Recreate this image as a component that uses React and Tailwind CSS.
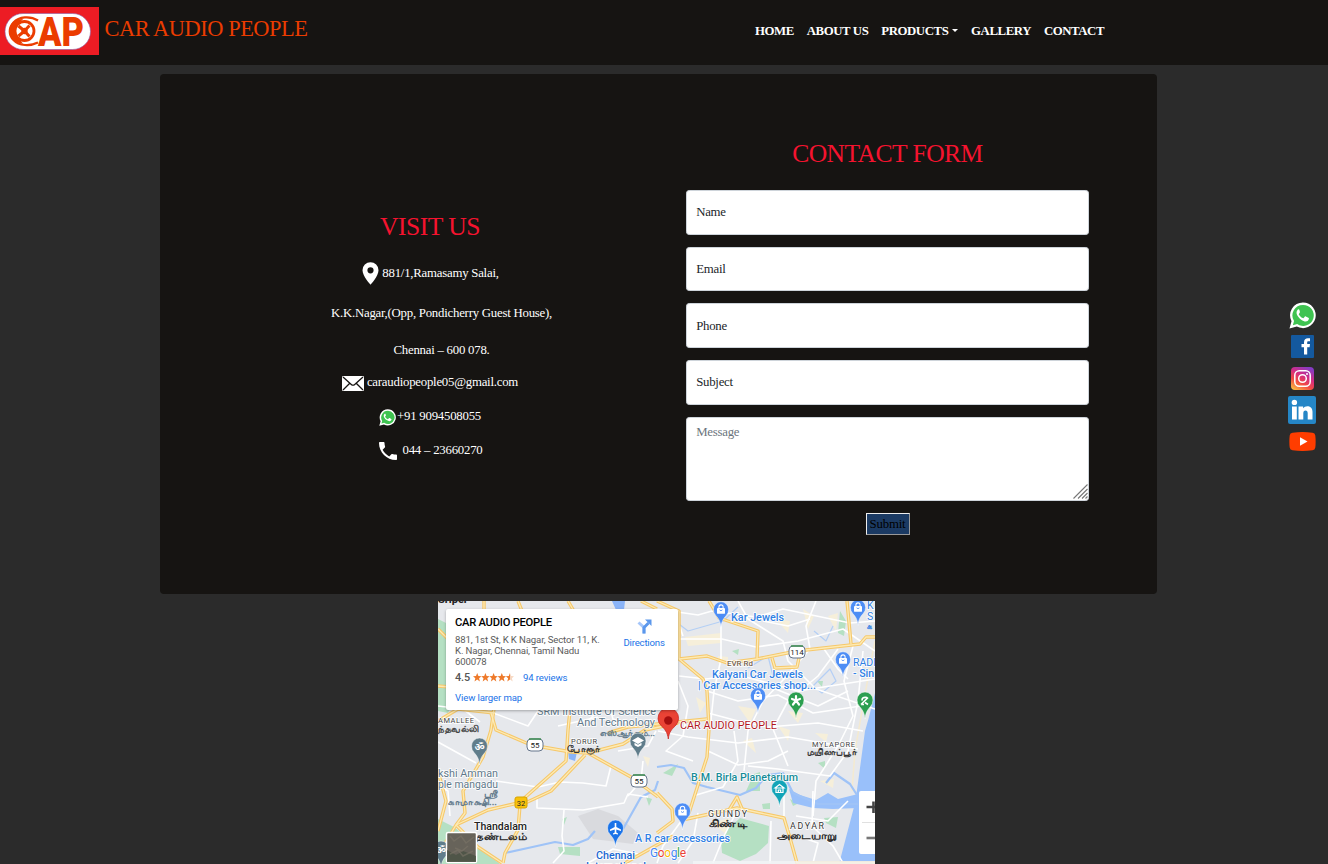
import React from 'react';

const navItems = ['HOME', 'ABOUT US', 'PRODUCTS', 'GALLERY', 'CONTACT'];

function Logo() {
  return (
    <svg width="99" height="48" viewBox="0 0 99 48" className="block shrink-0">
      <rect width="99" height="48" fill="#ed1c24" />
      <rect x="5" y="6.500" width="85.500" height="36" rx="18" fill="#fff" stroke="#8d5aa0" strokeWidth=".6" />
      <path d="M38 13.500C30 8.500 19 9.500 13.500 15.500C8.500 21 8.500 28 13.500 33C19 39 30 39.500 38 35.500" fill="none" stroke="#eb3c00" strokeWidth="2.200" />
      <path d="M20 13.500C7 15 7 33 20 35C15 29 15 19 20 13.500Z" fill="#eb3c00" stroke="#eb3c00" strokeWidth="2.500" />
      <circle cx="24.500" cy="24" r="9.500" fill="#fff" stroke="#eb3c00" strokeWidth="2.800" />
      <circle cx="24.500" cy="24" r="3.200" fill="#eb3c00" />
      <path d="M24.500 24L18.500 19M24.500 24L18.500 29M24.500 24L29.500 18.500M24.500 24L29.500 29.500" fill="none" stroke="#eb3c00" strokeWidth="3" />
      <text x="38" y="38.500" textLength="46" lengthAdjust="spacingAndGlyphs" fontFamily="Roboto" fontWeight="900" fontSize="40" fill="#eb3c00">AP</text>
    </svg>
  );
}

function WhatsApp({ size }) {
  return (
    <svg width={size} height={size} viewBox="0 0 28 28" className="block shrink-0">
      <path d="M14.500.5A13.300 13.300 0 0 0 2.600 20L.5 27.500l7.600-2A13.300 13.300 0 1 0 14.500.5Z" fill="#fff" />
      <path d="M14.500 3A10.900 10.900 0 0 0 5.200 19.600L4 24l4.500-1.200A10.900 10.900 0 1 0 14.500 3Z" fill="#3fc351" />
      <path d="M10.800 8.300c-.5-.9-1.200-.8-1.800-.2-3 3.300.3 7.800 3.600 10.200 3.500 2.500 6.800 2.600 7.900-.4.3-.9.200-1.300-.4-1.600l-2.700-1.300c-.5-.2-.8-.1-1.100.3l-1.100 1.300c-.3.300-.6.300-1 .1-1.800-.8-3.100-2.100-4-3.700-.2-.4-.1-.6.200-.9l.8-1.100c.2-.3.200-.6.100-.9Z" fill="#fff" />
    </svg>
  );
}

function Pin() {
  return (
    <svg width="17" height="23" viewBox="0 0 17 23" className="block shrink-0">
      <path fillRule="evenodd" d="M8.500.2A8 8 0 0 0 .5 8.200C.5 14.200 8.500 22.700 8.500 22.700S16.500 14.200 16.500 8.200A8 8 0 0 0 8.500.2Zm0 5a3.100 3.100 0 1 1 0 6.200 3.100 3.100 0 0 1 0-6.200Z" fill="#fff" />
    </svg>
  );
}

function Mail() {
  return (
    <svg width="22" height="15" viewBox="0 0 22 15" className="block shrink-0">
      <rect width="22" height="15" rx="1.200" fill="#fff" />
      <path d="M1 1l8.300 7.400q1.700 1.500 3.400 0L21 1M1 14l6.800-6.800M21 14l-6.800-6.800" fill="none" stroke="#161412" strokeWidth="1.300" />
    </svg>
  );
}

function Phone() {
  return (
    <svg width="18" height="18" viewBox="3 3 18 18" className="block shrink-0">
      <path d="M6.620 10.790c1.440 2.830 3.760 5.140 6.590 6.590l2.200-2.200c.27-.27.67-.36 1.020-.24 1.120.37 2.330.57 3.570.57.55 0 1 .45 1 1V20c0 .55-.45 1-1 1-9.390 0-17-7.610-17-17 0-.55.45-1 1-1h3.500c.55 0 1 .45 1 1 0 1.250.2 2.450.57 3.570.11.35.03.74-.25 1.020z" fill="#fff" />
    </svg>
  );
}

function Header() {
  return (
    <header className="flex h-[65px] bg-[#161412]">
      <div className="w-[750px] flex pt-[7px]">
        <Logo />
        <span className="ml-[5.500px] mt-[6px] text-[22.400px] leading-8 tracking-[-0.450px] text-[#eb3c00] whitespace-nowrap">CAR AUDIO PEOPLE</span>
      </div>
      <nav className="flex gap-[12.900px] pl-[5px] pt-[21px] text-[12.800px] leading-5 tracking-[-0.410px] font-bold text-white whitespace-nowrap">
        {navItems.map((item) => (
          <a key={item} href="#" className="flex">
            {item}
            {item === 'PRODUCTS' && <span className="ml-[3.800px] mt-2 h-0 w-0 border-x-[3.500px] border-t-[3.500px] border-x-transparent border-t-white" />}
          </a>
        ))}
      </nav>
    </header>
  );
}

function Visit() {
  return (
    <section className="w-[540px] shrink-0 pt-[137px] text-[12.800px] tracking-[-0.230px] text-white">
      <h2 className="h-8 text-center text-[25.600px] leading-8 tracking-[-0.500px] text-[#f5132f]">VISIT US</h2>
      <div className="mt-[18px] flex h-6 items-center justify-center gap-[3px] pl-[1px]"><Pin /><span className="pt-[2px]">881/1,Ramasamy Salai,</span></div>
      <div className="mt-4 flex h-6 items-center justify-center pl-[23px] pt-[2px]">K.K.Nagar,(Opp, Pondicherry Guest House),</div>
      <div className="mt-[13px] flex h-6 items-center justify-center pl-[23px] pt-[2px]">Chennai – 600 078.</div>
      <div className="mt-2 flex h-6 items-center justify-center gap-[3px]"><span className="pt-[3px]"><Mail /></span><span className="pt-[2px]">caraudiopeople05@gmail.com</span></div>
      <div className="mt-[10px] flex h-6 items-center justify-center gap-[1px]"><span className="pt-[3px]"><WhatsApp size={17} /></span><span className="pt-[2px]">+91 9094508055</span></div>
      <div className="mt-[10px] flex h-6 items-center justify-center gap-[6px] pl-[1px]"><span className="pt-[1px]"><Phone /></span><span className="pt-[2px]">044 – 23660270</span></div>
    </section>
  );
}

const field = 'block w-full rounded-[3.200px] border border-[#ced4da] bg-white px-[9.200px] text-[12.800px] tracking-[-0.250px] outline-none';

function ContactForm() {
  return (
    <form className="-ml-[14px] w-[403px] pt-16">
      <h2 className="h-8 text-center text-[25.600px] leading-8 tracking-[-0.550px] text-[#f5132f]">CONTACT FORM</h2>
      <div className="mt-5 flex flex-col gap-[12.200px]">
        {['Name', 'Email', 'Phone', 'Subject'].map((p) => (
          <input key={p} placeholder={p} className={field + ' h-[44.500px] pt-[1px] placeholder:text-[#212529]'} />
        ))}
        <div className="relative">
          <textarea placeholder="Message" className={field + ' h-[84px] resize-none pt-[5px] leading-[19.200px] placeholder:text-[#6c757d]'} />
          <svg width="15" height="15" viewBox="0 0 15 15" className="absolute bottom-[1.500px] right-[1.500px]">
            <path d="M.5 14.500l14-14M5 14.500L14.500 5M9 14.500L14.500 9M12.500 14.500l2-2" stroke="#777" strokeWidth="1.100" />
          </svg>
        </div>
      </div>
      <div className="mt-3 flex justify-center">
        <button type="button" className="h-[22px] w-[44px] border border-t-[#eee] border-l-[#eee] border-r-[#999] border-b-[#999] bg-[#1b3a63] text-center text-[12.800px] leading-5 tracking-[-0.200px] text-black">Submit</button>
      </div>
    </form>
  );
}

const white = [
  'M219 8L260 14L274 10L318 16L345 8L412 22L437 20', 'M283 18V58L276 90L272 128', 'M241 38H284L318 46L360 40L405 28L437 50',
  'M241 75L268 78L300 74L360 90L437 78', 'M300 0L310 18L345 40L350 60L378 88L437 108', 'M378 0L368 25L372 48L346 78L325 100L310 130L306 170',
  'M400 48L380 75L350 100L335 128L350 165', 'M415 45L406 80L415 115L400 145L378 180L375 215', 'M425 50L420 100L410 150L392 175L340 168L310 165',
  'M269 90L300 100L340 94L375 112L430 104', 'M270 112L300 120L330 126L380 122L425 130', 'M220 130L250 136L300 142L350 136L420 148',
  'M240 80L250 105L245 135L228 150L255 160', 'M270 150L300 164L330 160L350 150', 'M255 195L285 186L300 160L296 130',
  'M260 212L255 240L240 262', 'M300 208L286 235L275 262', 'M346 185V216', 'M358 215L390 220L410 200', 'M375 190L374 225L395 245L405 262', 'M360 235L380 242L375 262', 'M333 220L332 262',
  'M58 180L100 186L122 181L145 182L168 185L173 165', 'M99 198V207L145 209L186 202L190 193L210 196', 'M126 209L124 235L126 250L115 262', 'M0 141L38 162', 'M205 160L203 180L190 195', 'M180 150L210 145L218 130',
  'M150 120L170 100L175 118L200 125', 'M0 105L25 108L42 121', 'M50 110L90 125L100 110', 'M120 125L160 116', 'M238 15L245 35', 'M330 85L380 105L410 90',
  'M386 48L400 68L410 78', 'M325 20L350 25L372 18', 'M244 219L225 245L219 262', 'M0 184L10 190L12 215', 'M150 262L175 248L200 253',
];
const yellow = [
  'M219 0L241 10V58L265 78L269 90L271 128L269 156L251 212L244 219', 'M271 0L281 17L320 30L319 58', 'M241 58L269 55L289 62L319 58L359 50L386 47L422 43L428 36H437',
  'M409 0L413 43', 'M334 57L337 67L359 66L361 57', 'M170 132L190 126L269 118', 'M219 192L234 208L235 220L219 232', 'M244 219L299 207L346 217L352 237L359 262H437', 'M291 209L299 196L305 210',
  'M53 112L58 129L93 144L133 151L150 152L193 176L220 196', 'M133 100L130 129L128 160L83 200', 'M147 154L113 190L83 204', 'M150 152L185 143L207 129L240 122',
  'M57 100L53 129L45 156L25 190L27 212L18 224L0 254', 'M18 224L50 209L80 202', 'M82 204L80 229L67 252L65 262', 'M18 224L40 246L64 262', 'M0 170L8 200L0 230', 'M187 262L219 244L235 235', 'M0 120L20 108L57 112', 'M46 0V10M80 0L84 10M130 0L137 12M203 0L219 8', 'M0 28L10 38M0 85L12 86',
];
const rivers = ['M219 166L233 164L246 167L255 182L269 186L302 194L318 187L329 174L345 172L355 192L380 203H420', 'M67 252L90 247L117 241L135 244L150 238L157 230M185 228L203 196L217 189L220 180', 'M388 182L396 172L412 183L419 194'];
const streams = ['M335 75L330 55L310 67', 'M375 85L392 68L398 80L384 92L374 84', 'M237 20L250 30L285 20L300 6', 'M395 25L388 40L376 30'];

function Marker({ x, y, color, kind = 'bag', s = 1 }) {
  return (
    <g transform={`translate(${x} ${y}) scale(${s})`}>
      <path d="M0 12C-.6 5-3 2.500-5.500-.500A9 9 0 0 1-8-7A8 8 0 0 1 8-7A9 9 0 0 1 5.500-.500C3 2.500.6 5 0 12Z" fill={color} stroke="#fff" strokeWidth=".5" />
      <g transform="translate(0 2.500)">
        {kind === 'bag' && <><rect x="-4.200" y="-11" width="8.400" height="6" rx=".5" fill="#fff" /><path d="M-2.200-10.500v-1.500a2.200 2.200 0 0 1 4.400 0v1.500" fill="none" stroke="#fff" strokeWidth="1.100" /><path d="M-1.500-9q1.500 2 3 0" fill="none" stroke={color} strokeWidth=".9" /></>}
        {kind === 'tree' && <g stroke="#fff" strokeWidth="2.200" strokeLinecap="round"><path d="M0-9V-13.500M0-9L4-10.500M0-9L3-5M0-9L-3-5M0-9L-4-10.500" /></g>}
        {kind === 'leaf' && <path d="M-4-5L3-12M-3-9q0-4 5-3M0-7l3 2M-4-5h3" fill="none" stroke="#fff" strokeWidth="1.700" />}
        {kind === 'museum' && <path d="M-4.500-9.500L0-13l4.500 3.500zM-3.500-9v4h7v-4M-1.200-5v-2.500h2.400v2.500" fill="none" stroke="#fff" strokeWidth="1.200" />}
        {kind === 'school' && <path d="M-6-10L0-13.500L6-10L0-6.500ZM-3.500-7.700v2.500L0-3.500l3.500-1.700v-2.500L0-5.700Z" fill="#fff" />}
        {kind === 'plane' && <path d="M-.8-14.500h1.600v4L5.500-8v1.500L.8-8v3l1.700 1v1L0-3.500-2.500-3v-1l1.700-1v-3l-4.700 1.500V-8l4.700-2.500z" fill="#fff" />}
        {kind === 'om' && <text x="0" y="-6" textAnchor="middle" fontSize="10" fontWeight="700" fill="#fff" fontFamily="DejaVu Sans, Noto Sans, sans-serif">ॐ</text>}
      </g>
    </g>
  );
}

function Shield({ x, y, n }) {
  return (
    <g>
      <rect x={x - 8} y={y - 6} width="16" height="12" rx="4" fill="#fff" stroke="#64748b" />
      <path d={`M${x - 6} ${y - 6}h12`} stroke="#3f8f52" strokeWidth="1.500" />
      <text x={x} y={y + 3.200} textAnchor="middle" fontSize="8" fill="#222">{n}</text>
    </g>
  );
}

const labels = [
  ['Kar Jewels', 293, 20, 10.500, '#2f80e4'], ['Kalyani Car Jewels', 274, 77, 10.500, '#2f80e4'], ['| Car Accessories shop...', 260, 88, 10.500, '#2f80e4'],
  ['K', 429, 8, 10.500, '#2f80e4'], ['S', 429, 19, 10.500, '#2f80e4'], ['க', 429, 28, 8, '#2f80e4'], ['RADI', 415, 65, 10.500, '#2f80e4'], ['- Sin', 415, 76, 10.500, '#2f80e4'],
  ['EVR Rd', 289, 65, 8, '#76624c'], ['SRM Institute Of Science', 99, 114, 10.500, '#60788a'], ['And Technology', 139, 125, 10.500, '#60788a'], ['எஸ்ஆர்எம்...', 162, 135, 9, '#60788a'],
  ['AMALLEE', 0, 122, 7.500, '#444'], ['ந்தவல்லி', 0, 131, 9, '#444'], ['PORUR', 133, 143, 7.500, '#444'], ['போரூர்', 129, 151, 9, '#333'],
  ['kshi Amman', 0, 176, 10.500, '#60788a'], ['ple mangadu', 0, 187, 10.500, '#60788a'], ['ஸ்ரீ', 46, 196, 9, '#60788a'], ['காமாக்ஷி...', 10, 204, 9, '#60788a'],
  ['Thandalam', 36, 229, 10.500, '#222'], ['தண்டலம்', 38, 239, 10, '#222'], ['Chennai', 158, 258, 10.500, '#1967d2'], ['International', 148, 269, 10.500, '#1967d2'],
  ['A R car accessories', 197, 241, 10.500, '#2f80e4'], ['B.M. Birla Planetarium', 253, 180, 10.500, '#168b98'], ['GUINDY', 270, 216, 8.800, '#333'], ['கிண்டி', 271, 226, 10, '#222'],
  ['ADYAR', 352, 228, 8.800, '#333'], ['அடையாறு', 339, 238, 10, '#222'], ['MYLAPORE', 374, 146, 7.500, '#444'], ['மயிலாப்பூர்', 369, 154, 8.500, '#333'],
];
const widths = { 'Kar Jewels': 53, 'Kalyani Car Jewels': 91, '| Car Accessories shop...': 118, 'EVR Rd': 26, 'SRM Institute Of Science': 119, 'And Technology': 78, AMALLEE: 36, PORUR: 26, 'kshi Amman': 60, 'ple mangadu': 60, Thandalam: 53, Chennai: 39, International: 60, 'A R car accessories': 95, 'B.M. Birla Planetarium': 107, GUINDY: 39, ADYAR: 34, MYLAPORE: 43, 'எஸ்ஆர்எம்...': 55, 'ந்தவல்லி': 41, 'போரூர்': 33, 'காமாக்ஷி...': 49, 'தண்டலம்': 51, 'கிண்டி': 38, 'அடையாறு': 60, 'மயிலாப்பூர்': 50, 'ஸ்ரீ': 14 };
const isTamil = (t) => /[\u0b80-\u0bff]/.test(t);
const isCaps = (t) => /^[A-Z]+$/.test(t);

function MapDrawing() {
  return (
    <svg width="437" height="263" viewBox="0 0 437 263" className="block" fontFamily="Roboto, Noto Sans, sans-serif">
      <rect width="437" height="263" fill="#e6e8ec" />
      <g fill="#b5e0c3">
        <path d="M0 18L8 22L12 45L30 65L10 112L0 110Z" />
        <path d="M0 218L16 226L40 246L62 263H0Z" />
        <path d="M283 240L290 228L302 217L331 225L330 242L318 253L302 260L284 252Z" />
        <path d="M308 190L316 173L322 171L322 190ZM402 10L408 20L406 35L400 32ZM120 246H142V255L122 253ZM386 217L400 216L398 227L388 222ZM324 203L332 202V208H325ZM352 198L361 202L355 205ZM124 218L129 216L126 224ZM208 196L214 198L211 205ZM220 40L228 42L224 49ZM379 80L385 80L384 86Z" />
        <path d="M225 172L240 163L234 175ZM380 162L387 160V168ZM294 50L301 48L300 54Z" />
      </g>
      <path d="M140 215L160 208L180 215L200 232L195 243L155 238Z" fill="#d9dade" />
      <g fill="#f6efda">
        <path d="M247 36L283 32V42L250 45ZM280 55L290 56V63L280 62ZM300 105L318 108L312 122ZM365 8L376 15L370 28ZM350 110L365 112L360 122ZM305 140L314 137L318 152ZM382 180L396 178L395 187ZM258 96L268 102L262 112ZM338 18L352 20L350 32Z" />
        <path d="M340 125L352 129L350 140ZM390 15L400 12L398 30ZM273 222L292 217L288 233ZM205 155L212 157L210 166ZM377 132L390 133L388 141Z" />
      </g>
      <path d="M437 92L431 116L427 130L419 189L416 206L401 263H437Z" fill="#99c0fa" />
      <path d="M437 40L432 66L424 110L417 150L414 190" fill="none" stroke="#f4ead0" strokeWidth="1.500" />
      <path d="M351 188L362 194L378 199L390 192L400 198L420 193V207L395 208L375 207L355 202Z" fill="#99c0fa" />
      <path d="M130 150L139 151L137 160L131 158ZM174 0L187 0L186 9H178Z" fill="#8ab4f8" />
      {rivers.map((d) => <path key={d} d={d} fill="none" stroke="#9fc3f7" strokeWidth="2.200" strokeLinejoin="round" />)}
      {streams.map((d) => <path key={d} d={d} fill="none" stroke="#b4cff5" strokeWidth="1.200" strokeLinejoin="round" />)}
      <g fill="none" stroke="#fff" strokeWidth="1.600" strokeLinejoin="round">{white.map((d) => <path key={d} d={d} />)}</g>
      <g fill="none" stroke="#f6c86a" strokeWidth="3.400" strokeLinejoin="round">{yellow.map((d) => <path key={d} d={d} />)}</g>
      <g fill="none" stroke="#fdeab4" strokeWidth="1.300" strokeLinejoin="round">{yellow.map((d) => <path key={d} d={d} />)}</g>
      <Shield x={97} y={144} n="55" />
      <Shield x={201} y={180} n="55" />
      <Shield x={359} y={51} n="114" />
      <rect x="77" y="196" width="12" height="11" rx="2" fill="#f9c20a" stroke="#d6a400" />
      <text x="83" y="204.500" textAnchor="middle" fontSize="7.500" fill="#222">32</text>
      {labels.map(([t, x, y, size, color]) => (
        <text key={t} x={x} y={y} fontSize={size} fill={color} stroke={isTamil(t) ? color : '#fff'} strokeWidth={isTamil(t) ? 0.35 : 1.5} paintOrder="stroke" fontWeight={isCaps(t) || color === '#60788a' ? 400 : 500} textLength={widths[t]} lengthAdjust={isCaps(t) ? 'spacing' : 'spacingAndGlyphs'}>{t}</text>
      ))}
      <text x="0" y="2" fontSize="11" fontWeight="700" fill="#222">Sriper</text>
      <Marker x={283} y={15} color="#4d8df5" s={0.95} />
      <Marker x={420} y={13} color="#4d8df5" s={0.95} />
      <Marker x={405} y={65} color="#4d8df5" s={0.95} />
      <Marker x={320} y={101} color="#4d8df5" s={0.95} />
      <Marker x={358} y={106} color="#2c9f50" kind="tree" />
      <Marker x={427} y={106} color="#2c9f50" kind="leaf" />
      <Marker x={41.500} y={152} color="#607d8b" kind="om" />
      <Marker x={200} y={147} color="#607d8b" kind="school" />
      <Marker x={341.500} y={194} color="#12a4b8" kind="museum" />
      <Marker x={244.500} y={217} color="#4d8df5" />
      <Marker x={177.500} y={234} color="#1a73e8" kind="plane" />
      <Marker x={3} y={255} color="#607d8b" kind="om" />
      <path d="M230.300 138C229.500 131 226.500 128 223.500 125A10.300 10.300 0 1 1 237.100 125C234 128 231 131 230.300 138Z" fill="#ea4335" stroke="#c5221f" strokeWidth=".7" />
      <circle cx="230.300" cy="119.500" r="4.200" fill="#a50e0e" />
      <text x="242" y="128" fontSize="11" fill="#b3181f" stroke="#fff" strokeWidth="1.500" paintOrder="stroke" textLength="97" lengthAdjust="spacingAndGlyphs">CAR AUDIO PEOPLE</text>
      <text x="212" y="255.500" fontSize="12" fontWeight="400" stroke="#fff" strokeWidth="1.500" paintOrder="stroke" textLength="36">
        <tspan fill="#4285f4">G</tspan><tspan fill="#ea4335">o</tspan><tspan fill="#fbbc04">o</tspan><tspan fill="#4285f4">g</tspan><tspan fill="#34a853">l</tspan><tspan fill="#ea4335">e</tspan>
      </text>
      <rect x="255" y="260" width="182" height="3" fill="#f3f4f6" opacity=".8" />
      <g>
        <rect x="8.500" y="231.500" width="30" height="30" rx="1.500" fill="#67635a" stroke="#fff" strokeWidth="1.500" />
        <path d="M9 249L18 254L25 250L38 255V261H9Z" fill="#4a5144" opacity=".8" />
        <path d="M12 235l4 5 7-5 5 7 8-6M12 253l8-4 5 6 10-5M17 247l7 3 6-5" fill="none" stroke="#7b7468" strokeWidth="1.500" opacity=".6" />
      </g>
      <rect x="421" y="190" width="20" height="63" rx="2" fill="#fff" />
      <path d="M424 221.500H437" stroke="#e0e0e0" />
      <path d="M428.500 206H437M435.500 200.500V212" stroke="#444" strokeWidth="2.600" />
      <path d="M428.500 237H437" stroke="#777" strokeWidth="2.600" />
    </svg>
  );
}

function MapCard() {
  return (
    <div className="absolute left-2 top-2 flex h-[101px] w-[232px] rounded-[2px] bg-white pl-[9px] font-['Roboto',sans-serif] shadow-[0_1px_3px_rgba(0,0,0,0.3)]">
      <div className="w-[160px] whitespace-nowrap pt-[6px] text-[9.600px] leading-[11px] tracking-[-0.130px] text-[#5b5b5b]">
        <div className="text-[11.200px] font-medium leading-[15px] tracking-[-0.250px] text-black">CAR AUDIO PEOPLE</div>
        <div className="mt-[4px]">881, 1st St, K K Nagar, Sector 11, K.<br />K. Nagar, Chennai, Tamil Nadu<br />600078</div>
        <div className="mt-[4px] flex h-[13px] items-center">
          <span className="text-[10.900px] font-medium text-[#555]">4.5</span>
          <svg width="41" height="9" viewBox="0 0 41 9" className="ml-[3px]">
            {[0, 1, 2, 3].map((i) => <path key={i} transform={`translate(${i * 8.2} 0)`} d="M4.200 0l1.200 3 3 .2-2.300 2 .8 3.200-2.700-1.800-2.700 1.800.8-3.200L0 3.200 3 3z" fill="#ee7a2b" />)}
            <path transform="translate(32.800 0)" d="M4.200 0v6.600L1.500 8.400l.8-3.200L0 3.200 3 3z" fill="#ee7a2b" />
            <path transform="translate(32.800 0)" d="M4.200 0l1.200 3 3 .2-2.300 2 .8 3.200-2.700-1.800z" fill="#f7d8c2" />
          </svg>
          <a className="ml-[9px] text-[#1a73e8]">94 reviews</a>
        </div>
        <a className="mt-[7px] block leading-[13px] text-[#1a73e8]">View larger map</a>
      </div>
      <div className="flex w-[70px] flex-col items-center pt-[10px] text-[9.600px] leading-[12px] tracking-[-0.180px] text-[#1a73e8]">
        <svg width="15" height="15" viewBox="0 0 15 15" className="mb-[3px]">
          <path d="M7 14.500V8.500L1.500 3.500" fill="none" stroke="#a5c6fa" strokeWidth="3" /><path d="M7 14.500V8.500L11.500 4" fill="none" stroke="#5b97ec" strokeWidth="3" /><path d="M8 .5H14.500V7Z" fill="#5b97ec" />
        </svg>
        Directions
      </div>
    </div>
  );
}

function Social() {
  return (
    <aside className="absolute right-3 top-[302px] flex w-7 flex-col items-center">
      <WhatsApp size={27} />
      <svg width="23" height="23" viewBox="0 0 23 23" className="mt-[6px]">
        <rect width="23" height="23" rx="1" fill="#14599f" />
        <path d="M13 19.500v-7.200h-2.500V9H13V7.200c0-2.700 1.600-4 4-4h2v3.100h-1.500c-1 0-1.300.5-1.300 1.300V9H19l-.4 3.300h-2.400v7.200z" fill="#fff" />
      </svg>
      <svg width="23" height="23" viewBox="0 0 23 23" className="mt-[9px]">
        <defs>
          <linearGradient id="ig" x1="0.150" y1="1" x2="0.700" y2="0"><stop offset="0" stopColor="#fdbb40" /><stop offset=".35" stopColor="#f14a43" /><stop offset=".65" stopColor="#d22c86" /><stop offset="1" stopColor="#863bc4" /></linearGradient>
        </defs>
        <rect width="23" height="23" rx="4" fill="url(#ig)" />
        <rect x="3.800" y="3.800" width="15.400" height="15.400" rx="4.500" fill="none" stroke="#fff" strokeWidth="1.500" />
        <circle cx="11.500" cy="11.500" r="3.800" fill="none" stroke="#fff" strokeWidth="1.500" /><circle cx="16" cy="7" r="1" fill="#fff" />
      </svg>
      <svg width="28" height="28" viewBox="0 0 28 28" className="mt-[6px]">
        <rect width="28" height="28" rx="2" fill="#2586c6" />
        <path d="M4 10.500h4.800v13H4zM10.500 10.500h4.600v1.800c2.200-3.400 9.400-3 9.400 3.400v7.800h-4.800v-6.600c0-3.300-4.400-3.300-4.400 0v6.600h-4.800z" fill="#fff" /><circle cx="6.400" cy="6.400" r="2.700" fill="#fff" />
      </svg>
      <svg width="27" height="19" viewBox="0 0 27 19" className="mt-[8px]">
        <path d="M3.500.7Q13.500-.5 23.500.7Q26 1 26.300 3.500Q27 9.500 26.300 15.500Q26 18 23.500 18.300Q13.500 19.500 3.500 18.300Q1 18 .7 15.500Q0 9.500.7 3.500Q1 1 3.500.7Z" fill="#ff3d00" /><path d="M11 5.300L18.500 9.500L11 13.700Z" fill="#fff" />
      </svg>
    </aside>
  );
}

export default function App() {
  return (
    <div className="relative h-[864px] w-[1328px] overflow-hidden bg-[#2b2b2b] font-['Liberation_Serif',serif]">
      <Header />
      <main className="ml-[160px] mt-[9px] flex h-[520px] w-[997px] rounded-[4px] bg-[#161412]">
        <Visit />
        <ContactForm />
      </main>
      <div className="relative ml-[438px] mt-[7px] h-[263px] w-[437px] overflow-hidden">
        <MapDrawing />
        <MapCard />
      </div>
      <Social />
    </div>
  );
}
